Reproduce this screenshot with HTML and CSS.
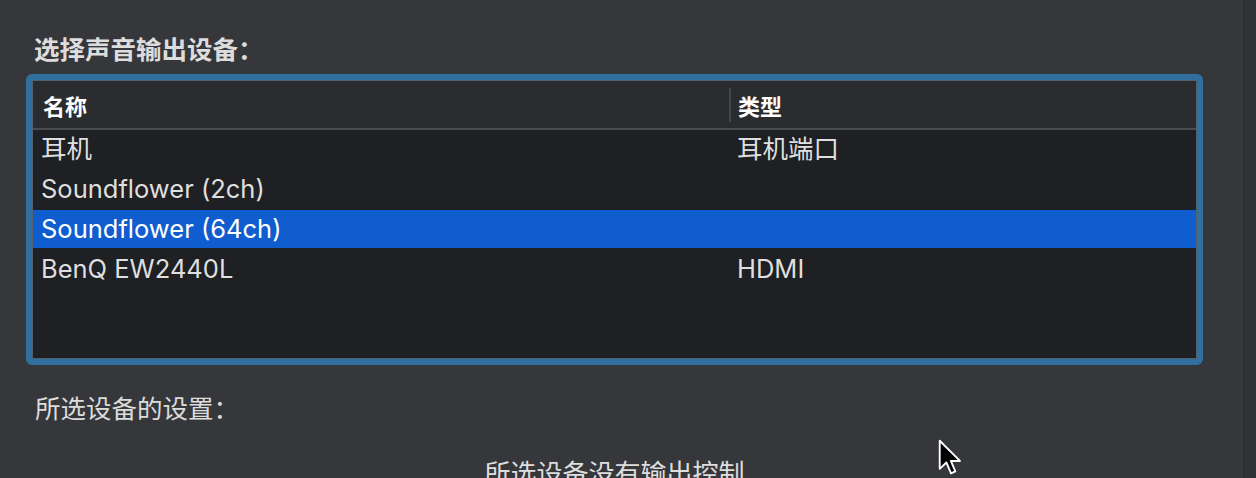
FILE: index.html
```html
<!DOCTYPE html>
<html lang="zh-CN">
<head>
<meta charset="utf-8">
<title>声音输出</title>
<link rel="stylesheet" href="styles.css">
</head>
<body>
<div class="window">
  <main class="pane">
    <h2 class="label label-strong">选择声音输出设备：</h2>
    <div class="focus-ring">
      <div class="table">
        <div class="thead">
          <div class="th">名称</div>
          <div class="th th-divided">类型</div>
        </div>
        <div class="tbody">
          <div class="tr"><div class="td td-name">耳机</div><div class="td">耳机端口</div></div>
          <div class="tr"><div class="td td-name">Soundflower (2ch)</div><div class="td"></div></div>
          <div class="tr tr-selected"><div class="td td-name">Soundflower (64ch)</div><div class="td"></div></div>
          <div class="tr"><div class="td td-name">BenQ EW2440L</div><div class="td">HDMI</div></div>
        </div>
      </div>
    </div>
    <p class="label label-settings">所选设备的设置：</p>
    <p class="no-controls">所选设备没有输出控制</p>
  </main>
  <aside class="sidebar"></aside>
  <svg class="cursor" width="24" height="36" viewBox="0 0 14 21" aria-hidden="true">
    <path d="M1 1 V17.4 L4.9 13.7 L7.6 20 L10.1 18.9 L7.5 12.8 H12.8 Z" fill="#000" stroke="#fff" stroke-width="1.1" stroke-linejoin="round"/>
  </svg>
</div>
</body>
</html>
```

FILE: styles.css
```css
* { box-sizing: border-box; }

html, body {
  margin: 0;
  padding: 0;
  background: #36373b;
}

body {
  font-family: Inter, "Noto Sans CJK SC", sans-serif;
  color: #dedede;
}

.window {
  position: relative;
  display: flex;
  width: 1256px;
  height: 478px;
  overflow: hidden;
  background: #36373b;
}

.pane {
  flex: 0 0 1243px;
  padding: 32px 40px 0 26px;
}

.sidebar {
  flex: 1;
  background: #313236;
  border-left: 1px solid #2a2b2e;
}

.label {
  margin: 0 0 0 8px;
  font-family: "Noto Sans CJK SC", sans-serif;
  font-size: 25.5px;
  line-height: 32px;
  font-weight: 400;
  color: #dcdcdc;
}

.label-strong {
  font-weight: 700;
  color: #dddddd;
}

.focus-ring {
  margin-top: 10px;
  border: 6px solid #30709f;
  border-radius: 6px;
  height: 291px;
}

.table {
  height: 100%;
  border: 1px solid #52606e;
  background: #1f2023;
  display: flex;
  flex-direction: column;
}

.thead {
  display: grid;
  grid-template-columns: 696px 1fr;
  align-items: center;
  height: 49px;
  background: #2b2c30;
  border-bottom: 2px solid #4b4c50;
}

.th {
  font-family: Inter, "Noto Sans CJK SC", sans-serif;
  font-size: 22px;
  font-weight: 700;
  color: #ffffff;
  padding-left: 10px;
}

.th-divided {
  height: 34px;
  display: flex;
  align-items: center;
  border-left: 2px solid #45464a;
  padding-left: 7px;
}

.tbody {
  display: flex;
  flex-direction: column;
  gap: 2px;
}

.tr {
  display: grid;
  grid-template-columns: 696px 1fr;
  align-items: center;
  height: 38px;
}

.tr-selected {
  background: #0f5dce;
}

.tr-selected .td {
  color: #ffffff;
}

.td {
  font-family: Inter, "Noto Sans CJK SC", sans-serif;
  font-size: 25.5px;
  line-height: 30px;
  color: #dfdfdf;
  padding-left: 8px;
  white-space: nowrap;
}

.label-settings {
  margin-top: 26px;
  margin-left: 9px;
}

.no-controls {
  margin: 33px 0 0 0;
  text-align: center;
  font-family: "Noto Sans CJK SC", sans-serif;
  font-size: 26px;
  line-height: 32px;
  color: #dedede;
}

.cursor {
  position: absolute;
  left: 938px;
  top: 439px;
}
```
